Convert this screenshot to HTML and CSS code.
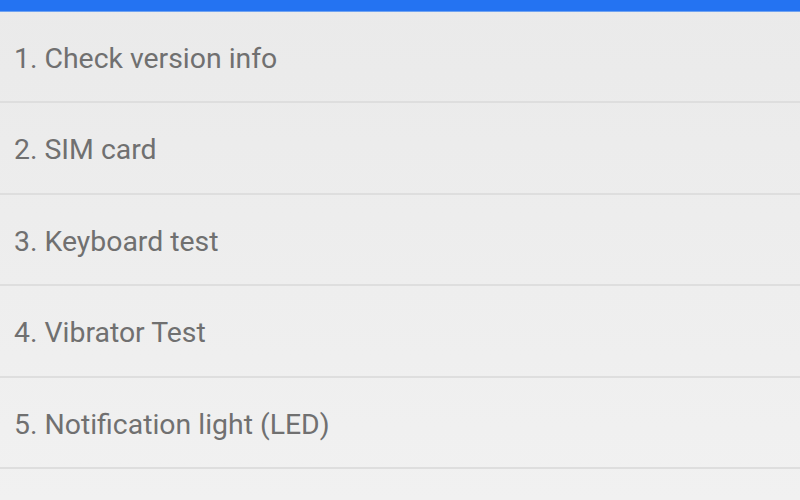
FILE: index.html
```html
<!DOCTYPE html>
<html lang="en">
<head>
    <meta charset="UTF-8">
    <meta name="viewport" content="width=device-width, initial-scale=1.0">
    <title>Test menu</title>
    <link rel="stylesheet" href="styles.css">
</head>
<body>
    <div class="topbar"></div>
    <ul class="tests">
        <li class="test">1. Check version info</li>
        <li class="test">2. SIM card</li>
        <li class="test">3. Keyboard test</li>
        <li class="test">4. Vibrator Test</li>
        <li class="test">5. Notification light (LED)</li>
    </ul>
</body>
</html>
```

FILE: styles.css
```css
html {
    background: #f1f1f1;
}
body {
    margin: 0;
    font-family: Roboto, "Noto Sans", sans-serif;
    background: linear-gradient(#eaeaea, #f1f1f1);
    height: 500px;
    overflow: hidden;
}
.topbar {
    height: 11px;
    background-color: #2473f2;
    border-bottom: 1px solid #6fa2f0;
}
.tests {
    list-style: none;
    margin: 0;
    padding: 0;
}
.test {
    height: 84.4px;
    padding: 5px 0 0 14px;
    border-bottom: 2px solid #dedede;
    font-size: 28.4px;
    line-height: 1;
    color: #707070;
    display: flex;
    align-items: center;
}
```
